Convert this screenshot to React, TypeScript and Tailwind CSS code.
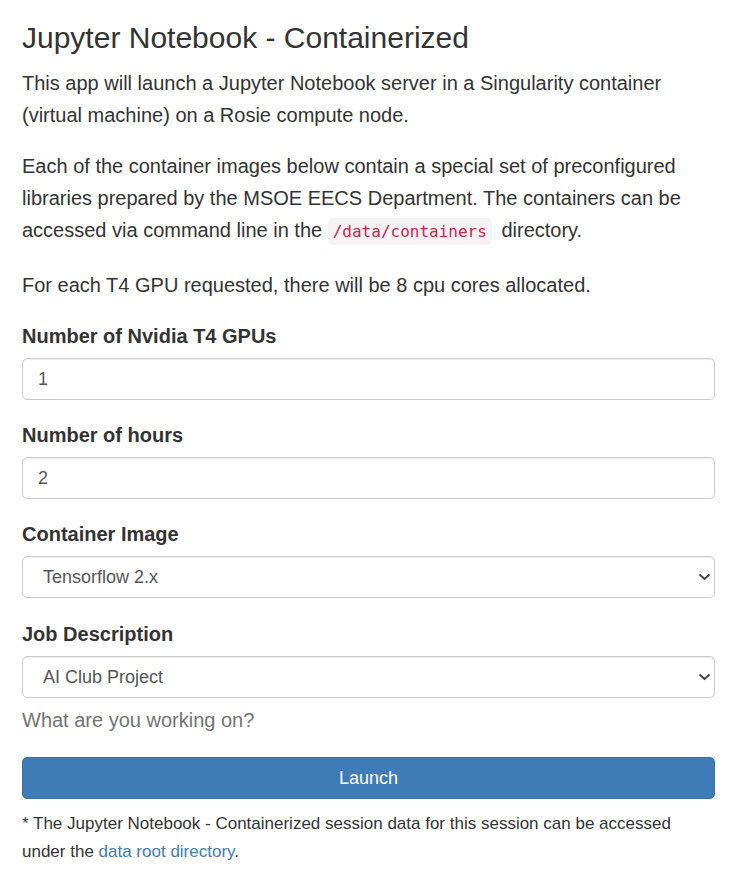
import React from "react";

const font = { fontFamily: '"Liberation Sans", Arial, sans-serif' };

function Chevron() {
  return (
    <svg
      width="13"
      height="8"
      viewBox="0 0 13 8"
      className="pointer-events-none absolute right-[4px] top-1/2 -translate-y-1/2"
    >
      <path d="M1.5 1.5 L6.5 6 L11.5 1.5" fill="none" stroke="#444" strokeWidth="2" />
    </svg>
  );
}

function Field({ label, gap, children }: { label: string; gap: string; children: React.ReactNode }) {
  return (
    <div className={gap}>
      <label className="block text-[20px] leading-[32px] font-bold mb-[6px]">{label}</label>
      {children}
    </div>
  );
}

const inputCls =
  "block w-full h-[42px] px-[15px] text-[18px] text-[#555] bg-white border border-[#ccc] rounded-[5px] shadow-[inset_0_1px_1px_rgba(0,0,0,0.075)] outline-none";

const selectCls =
  "block w-full h-[42px] pl-[20px] pr-[30px] text-[18px] text-[#555] bg-white border border-[#ccc] rounded-[5px] shadow-[inset_0_1px_1px_rgba(0,0,0,0.075)] outline-none appearance-none";

export default function App() {
  return (
    <div className="bg-white text-[#333] min-h-[880px]" style={font}>
      <div className="w-[693px] ml-[22px] pt-[19px]">
        <h1 className="text-[30px] leading-[38px] font-normal mb-[10px]">
          Jupyter Notebook - Containerized
        </h1>
        <p className="text-[20px] leading-[32px] mb-[19px]">
          This app will launch a Jupyter Notebook server in a Singularity container
          (virtual machine) on a Rosie compute node.
        </p>
        <p className="text-[20px] leading-[32px] mb-[21px]">
          Each of the container images below contain a special set of preconfigured
          libraries prepared by the MSOE EECS Department. The containers can be
          accessed via command line in the{" "}
          <code
            className="text-[16px] px-[5px] py-[4px] mr-[4px] rounded-[5px] bg-[#f9f2f4] text-[#c7254e]"
            style={{ fontFamily: '"DejaVu Sans Mono", "Liberation Mono", monospace' }}
          >
            /data/containers
          </code>{" "}
          directory.
        </p>
        <p className="text-[20px] leading-[32px] mb-[19px]">
          For each T4 GPU requested, there will be 8 cpu cores allocated.
        </p>

        <Field label="Number of Nvidia T4 GPUs" gap="mb-[19px]">
          <input className={inputCls} defaultValue="1" style={font} />
        </Field>
        <Field label="Number of hours" gap="mb-[19px]">
          <input className={inputCls} defaultValue="2" style={font} />
        </Field>
        <Field label="Container Image" gap="mb-[20px]">
          <div className="relative">
            <select className={selectCls} defaultValue="tf" style={font}>
              <option value="tf">Tensorflow 2.x</option>
            </select>
            <Chevron />
          </div>
        </Field>
        <div>
          <label className="block text-[20px] leading-[32px] font-bold mb-[6px]">
            Job Description
          </label>
          <div className="relative">
            <select className={selectCls} defaultValue="ai" style={font}>
              <option value="ai">AI Club Project</option>
            </select>
            <Chevron />
          </div>
          <p className="text-[20px] leading-[32px] text-[#737373] mt-[6px]">
            What are you working on?
          </p>
        </div>

        <button className="mt-[21px] w-full h-[42px] rounded-[5px] bg-[#3e7bb7] border border-[#3a72a8] text-white text-[18px]">
          Launch
        </button>

        <p className="mt-[11px] text-[17px] leading-[28px]">
          * The Jupyter Notebook - Containerized session data for this session can be
          accessed under the <a className="text-[#3f7cb8]">data root directory</a>.
        </p>
      </div>
    </div>
  );
}
